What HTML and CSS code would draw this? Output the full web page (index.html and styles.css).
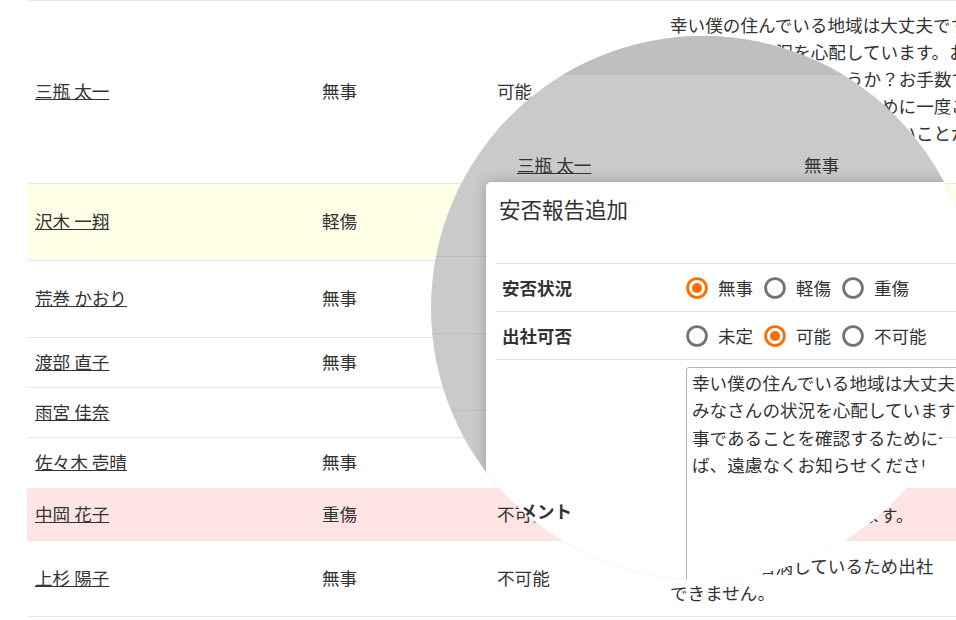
FILE: index.html
```html
<!DOCTYPE html>
<html lang="ja">
<head>
    <meta charset="UTF-8">
    <title>安否確認</title>
    <link rel="stylesheet" href="styles.css">
</head>
<body>
    <div class="screen">
        <!-- 安否一覧 -->
        <div class="list">
            <div class="row h183">
                <a class="name" href="">三瓶 太一</a>
                <span>無事</span>
                <span>可能</span>
                <p class="comment">幸い僕の住んでいる地域は大丈夫です。<br>みなさんの状況を心配しています。お元気<br>皆さんはご無事でしょうか？お手数ですが、無<br>事であることを確認するために一度ご連絡<br>いただけますか。何か足りないことがあれ<br>ば、遠慮なくお知らせください。</p>
            </div>
            <div class="row h77 minor">
                <a class="name" href="">沢木 一翔</a>
                <span>軽傷</span>
                <span>可能</span>
                <p class="comment">足首を軽くひねりましたが、<br>出社は可能です。</p>
            </div>
            <div class="row h77">
                <a class="name" href="">荒巻 かおり</a>
                <span>無事</span>
                <span>可能</span>
                <p class="comment">自宅周辺は停電していますが、<br>家族全員無事です。</p>
            </div>
            <div class="row h50">
                <a class="name" href="">渡部 直子</a>
                <span>無事</span>
                <span>可能</span>
                <p class="comment">特に問題ありません。</p>
            </div>
            <div class="row h50">
                <a class="name" href="">雨宮 佳奈</a>
                <span></span>
                <span></span>
                <p class="comment"></p>
            </div>
            <div class="row h51">
                <a class="name" href="">佐々木 壱晴</a>
                <span>無事</span>
                <span>可能</span>
                <p class="comment">問題ありません。</p>
            </div>
            <div class="row h52 serious">
                <a class="name" href="">中岡 花子</a>
                <span>重傷</span>
                <span>不可能</span>
                <p class="comment">足を骨折して入院しています。</p>
            </div>
            <div class="row h76">
                <a class="name" href="">上杉 陽子</a>
                <span>無事</span>
                <span>不可能</span>
                <p class="comment">母が負傷し看病しているため出社<br>できません。</p>
            </div>
        </div>

        <!-- 拡大レンズ：モーダル表示中の画面 -->
        <div class="lens">
            <div class="lens-view">
                <div class="dim-band"></div>
                <div class="dim-row h182">
                    <a class="name" href="">三瓶 太一</a>
                    <span>無事</span>
                </div>
                <div class="dim-row h77"></div>
                <div class="dim-row h77"></div>

                <div class="modal">
                    <h2 class="modal-title">安否報告追加</h2>
                    <div class="form">
                        <div class="form-row">
                            <div class="form-label">安否状況</div>
                            <div class="options">
                                <svg class="radio on" viewBox="0 0 22 22"><circle cx="11" cy="11" r="9.4"/><circle class="dot" cx="11" cy="11" r="5"/></svg>
                                <span class="opt">無事</span>
                                <svg class="radio" viewBox="0 0 22 22"><circle cx="11" cy="11" r="9.4"/></svg>
                                <span class="opt">軽傷</span>
                                <svg class="radio" viewBox="0 0 22 22"><circle cx="11" cy="11" r="9.4"/></svg>
                                <span class="opt">重傷</span>
                            </div>
                        </div>
                        <div class="form-row">
                            <div class="form-label">出社可否</div>
                            <div class="options">
                                <svg class="radio" viewBox="0 0 22 22"><circle cx="11" cy="11" r="9.4"/></svg>
                                <span class="opt">未定</span>
                                <svg class="radio on" viewBox="0 0 22 22"><circle cx="11" cy="11" r="9.4"/><circle class="dot" cx="11" cy="11" r="5"/></svg>
                                <span class="opt">可能</span>
                                <svg class="radio" viewBox="0 0 22 22"><circle cx="11" cy="11" r="9.4"/></svg>
                                <span class="opt">不可能</span>
                            </div>
                        </div>
                        <div class="form-row comment-row">
                            <div class="form-label">コメント</div>
                            <textarea class="memo" wrap="off">幸い僕の住んでいる地域は大丈夫です。
みなさんの状況を心配しています。お元気ですか？
事であることを確認するために一度ご連絡いただけますか。
ば、遠慮なくお知らせください。</textarea>
                        </div>
                    </div>
                </div>
            </div>
        </div>
    </div>
</body>
</html>
```

FILE: styles.css
```css
*{
    margin:0;
    padding:0;
}
body{
    font-family:"Noto Sans CJK JP","Noto Sans",sans-serif;
    font-size:17.6px;
    color:#333;
    background:#fff;
    overflow:hidden;
}
.screen{
    width:956px;
    height:620px;
    position:relative;
    overflow:hidden;
}
.name{
    color:#333;
    text-decoration:underline;
}

/* 一覧 */
.list{
    margin-left:27px;
    width:1100px;
    border-bottom:1px solid #e8e8e8;
}
.row{
    display:grid;
    grid-template-columns:287px 175px 173px 1fr;
    align-items:center;
    box-sizing:border-box;
    border-top:1px solid #e8e8e8;
}
.row > *{
    padding:0 8px 3px;
}
.row .comment{
    padding-bottom:0;
    line-height:27px;
    white-space:nowrap;
}
.row.minor{
    background:#fffee7;
}
.row.serious{
    background:#ffe4e4;
}
.h183{height:183px;}
.h182{height:182px;}
.h77{height:77px;}
.h76{height:76px;}
.h52{height:52px;}
.h51{height:51px;}
.h50{height:50px;}

/* レンズ */
.lens{
    position:absolute;
    left:431px;
    top:36px;
    width:544px;
    height:544px;
    border-radius:50%;
    overflow:hidden;
}
.lens-view{
    position:relative;
    width:956px;
    height:620px;
    margin:-36px 0 0 -431px;
    background:#cacaca;
}
.dim-band{
    height:75px;
    background:#bfbfbf;
}
.dim-row{
    display:grid;
    grid-template-columns:287px 175px;
    align-items:center;
    padding-left:509px;
    box-sizing:border-box;
    border-bottom:1px solid #bdbdbd;
}
.dim-row > *{
    padding:0 8px 3px;
}

/* モーダル */
.modal{
    position:absolute;
    left:486px;
    top:182px;
    width:560px;
    height:520px;
    background:#fff;
    border-radius:5px;
    box-shadow:0 0 14px rgba(0,0,0,.22);
}
.modal-title{
    font-size:21.5px;
    font-weight:normal;
    line-height:30px;
    padding:12px 13px 39px;
}
.form{
    margin-left:11px;
}
.form-row{
    display:flex;
    align-items:center;
    height:48px;
    box-sizing:border-box;
    border-top:1px solid #dedede;
}
.form-label{
    width:189px;
    flex:none;
    padding-left:5px;
    box-sizing:border-box;
    font-size:17.5px;
    font-weight:bold;
}
.options{
    display:flex;
    align-items:center;
    font-size:17.5px;
}
.radio{
    width:22px;
    height:22px;
    flex:none;
}
.radio circle{
    fill:none;
    stroke:#737373;
    stroke-width:2.8;
}
.radio.on circle{
    stroke:#ff6d00;
}
.radio.on .dot{
    fill:#ff6d00;
    stroke:none;
}
.opt{
    margin:0 11px 0 10px;
}
.comment-row{
    height:auto;
    align-items:center;
    padding:7px 0 8px;
}
.memo{
    width:320px;
    height:286px;
    box-sizing:border-box;
    border:1px solid #b4b4b4;
    border-radius:3px;
    padding:1px 5px;
    font-family:"Noto Sans CJK JP","Noto Sans",sans-serif;
    font-size:17.6px;
    line-height:27.3px;
    color:#333;
    resize:none;
    overflow:hidden;
    white-space:pre;
    background:#fff;
}
```
